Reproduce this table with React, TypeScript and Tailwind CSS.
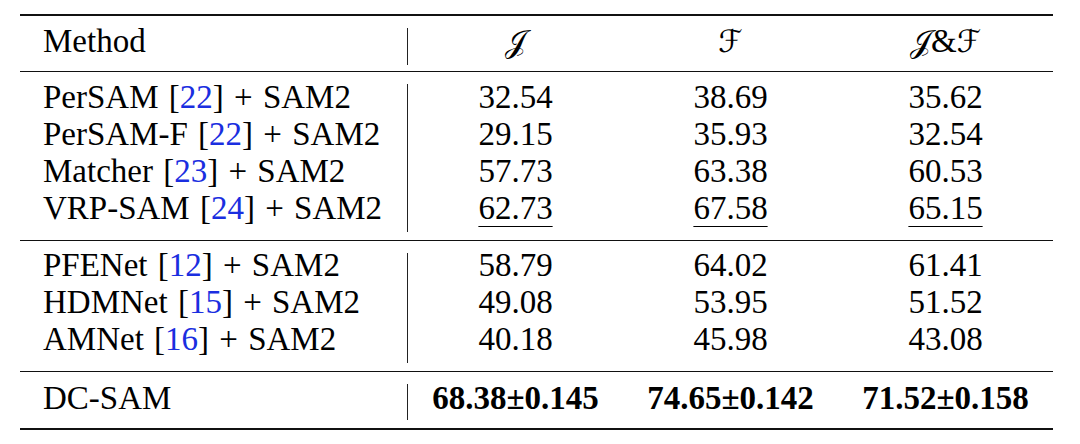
import React from "react";

type Row = {
  name: string;
  cite?: string;
  j: string;
  f: string;
  jf: string;
  best?: boolean;
  second?: boolean;
};

const sections: { rows: Row[]; pt: string; pb: string }[] = [
  {
    pt: "pt-[7px]",
    pb: "pb-[13px]",
    rows: [
      { name: "PerSAM", cite: "22", j: "32.54", f: "38.69", jf: "35.62" },
      { name: "PerSAM-F", cite: "22", j: "29.15", f: "35.93", jf: "32.54" },
      { name: "Matcher", cite: "23", j: "57.73", f: "63.38", jf: "60.53" },
      { name: "VRP-SAM", cite: "24", j: "62.73", f: "67.58", jf: "65.15", second: true },
    ],
  },
  {
    pt: "pt-[6px]",
    pb: "pb-[13px]",
    rows: [
      { name: "PFENet", cite: "12", j: "58.79", f: "64.02", jf: "61.41" },
      { name: "HDMNet", cite: "15", j: "49.08", f: "53.95", jf: "51.52" },
      { name: "AMNet", cite: "16", j: "40.18", f: "45.98", jf: "43.08" },
    ],
  },
  {
    pt: "pt-[8px]",
    pb: "pb-[11px]",
    rows: [
      { name: "DC-SAM", j: "68.38±0.145", f: "74.65±0.142", jf: "71.52±0.158", best: true },
    ],
  },
];

// cell value, underlined for second best, bold for ours
const Value = ({ v, row }: { v: string; row: Row }) => (
  <div className="h-[37px]">
    <span
      className={`${row.best ? "font-bold" : ""} ${
        row.second ? "underline decoration-1 underline-offset-[7px]" : ""
      }`}
    >
      {v}
    </span>
  </div>
);

const VLine = ({ mb }: { mb: string }) => (
  <div className={`w-px bg-[#222] mt-[12px] ${mb}`} />
);

const Cal = ({ c }: { c: string }) => (
  <span className="font-['DejaVu_Serif','DejaVu_Sans',serif] text-[31px]">{c}</span>
);

const App = () => {
  return (
    <div className="w-[1080px] h-[444px] bg-white pt-[14px] pl-[20px] text-black font-['Liberation_Serif','DejaVu_Serif',serif] text-[33px] leading-[37px]">
      <div className="w-[1033px]">
        <div className="h-[2px] bg-[#111]" />

        {/* header */}
        <div className="flex">
          <div className="w-[387px] pl-[23px] pt-[7px] pb-[11px]">Method</div>
          <VLine mb="mb-[6px]" />
          <div className="w-[215px] pt-[7px] text-center">
            <Cal c="𝒥" />
          </div>
          <div className="w-[215px] pt-[7px] text-center">
            <Cal c="ℱ" />
          </div>
          <div className="w-[215px] pt-[7px] text-center">
            <Cal c="𝒥" />&amp;<Cal c="ℱ" />
          </div>
        </div>
        <div className="h-px bg-[#111]" />

        {sections.map((s, i) => (
          <div key={i}>
            <div className="flex">
              <div className={`w-[387px] pl-[23px] [word-spacing:2px] ${s.pt} ${s.pb}`}>
                {s.rows.map((r) => (
                  <div key={r.name} className="h-[37px] whitespace-nowrap">
                    {r.name}
                    {r.cite && (
                      <>
                        {" "}[<span className="text-[#1a2ee0]">{r.cite}</span>] + SAM2
                      </>
                    )}
                  </div>
                ))}
              </div>
              <VLine mb="mb-[8px]" />
              <div className={`w-[215px] text-center ${s.pt}`}>
                {s.rows.map((r) => (
                  <Value key={r.name} v={r.j} row={r} />
                ))}
              </div>
              <div className={`w-[215px] text-center ${s.pt}`}>
                {s.rows.map((r) => (
                  <Value key={r.name} v={r.f} row={r} />
                ))}
              </div>
              <div className={`w-[215px] text-center ${s.pt}`}>
                {s.rows.map((r) => (
                  <Value key={r.name} v={r.jf} row={r} />
                ))}
              </div>
            </div>
            <div className={i === 2 ? "h-[2px] bg-[#111]" : "h-px bg-[#111]"} />
          </div>
        ))}
      </div>
    </div>
  );
};

export default App;
